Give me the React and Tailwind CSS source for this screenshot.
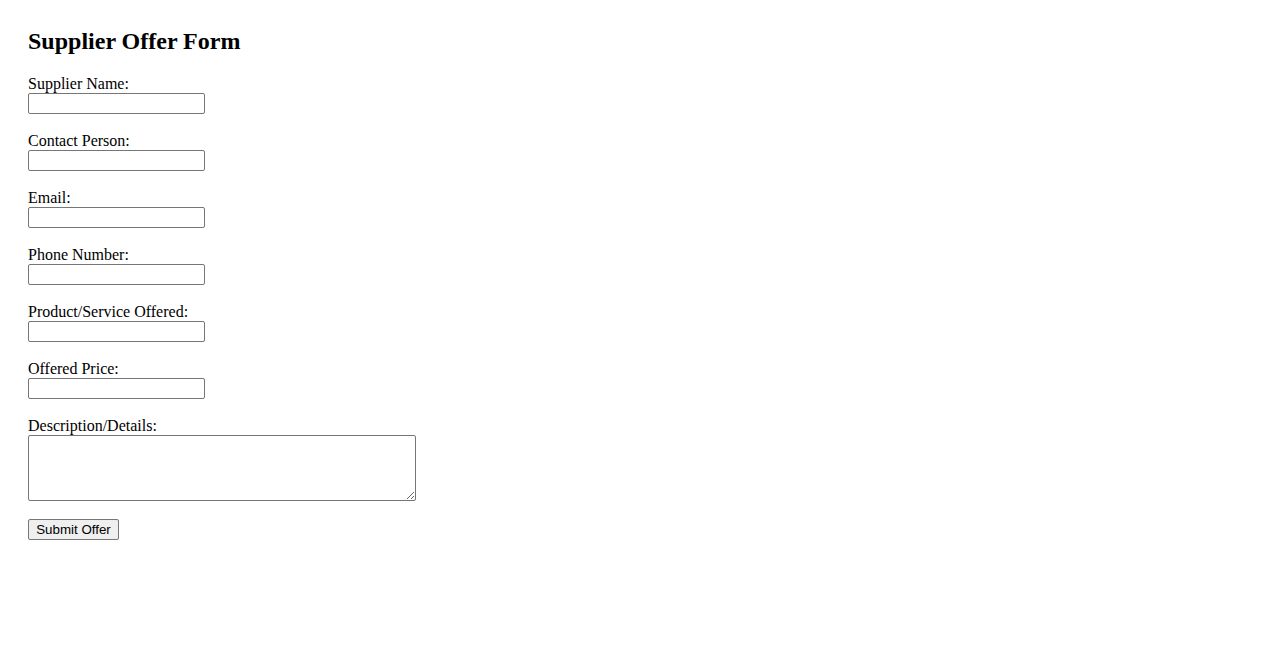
import { useState } from 'react';

const fields = [
  { id: 'supplierName', label: 'Supplier Name:', type: 'text' },
  { id: 'contactPerson', label: 'Contact Person:', type: 'text' },
  { id: 'email', label: 'Email:', type: 'email' },
  { id: 'phone', label: 'Phone Number:', type: 'tel' },
  { id: 'product', label: 'Product/Service Offered:', type: 'text' },
  { id: 'price', label: 'Offered Price:', type: 'text' },
];

export default function App() {
  const [form, setForm] = useState({});

  const update = (id) => (e) => setForm({ ...form, [id]: e.target.value });

  return (
    <div
      className="min-h-screen bg-white text-black px-7 pt-[27px] pb-7"
      style={{ fontFamily: '"Liberation Serif", "Times New Roman", serif' }}
    >
      <h2 className="text-[24px] leading-[28px] font-bold mb-5">Supplier Offer Form</h2>

      <form className="flex flex-col items-start" onSubmit={(e) => e.preventDefault()}>
        {fields.map((f) => (
          <div key={f.id} className="flex flex-col items-start mb-[18px]">
            <label htmlFor={f.id} className="block text-[16px] leading-[18px]">
              {f.label}
            </label>
            <input
              id={f.id}
              type={f.type}
              value={form[f.id] || ''}
              onChange={update(f.id)}
              className="block w-[177px] h-[21px] border border-[#767676] rounded-[2px] px-[2px] bg-white text-[13.33px] outline-none"
              style={{ fontFamily: '"Liberation Sans", Arial, sans-serif' }}
            />
          </div>
        ))}

        <div className="flex flex-col items-start mb-[18px]">
          <label htmlFor="details" className="block text-[16px] leading-[18px]">
            Description/Details:
          </label>
          <textarea
            id="details"
            value={form.details || ''}
            onChange={update('details')}
            className="block w-[388px] h-[66px] border border-[#767676] rounded-[2px] px-[2px] py-[2px] bg-white text-[13.33px] outline-none"
            style={{ fontFamily: '"Liberation Mono", monospace' }}
          />
        </div>

        <button
          type="submit"
          className="h-[21px] w-[91px] border border-[#767676] rounded-[2px] bg-[#efefef] text-[13.33px] leading-none px-[6px] text-black"
          style={{ fontFamily: '"Liberation Sans", Arial, sans-serif' }}
        >
          Submit Offer
        </button>
      </form>
    </div>
  );
}
